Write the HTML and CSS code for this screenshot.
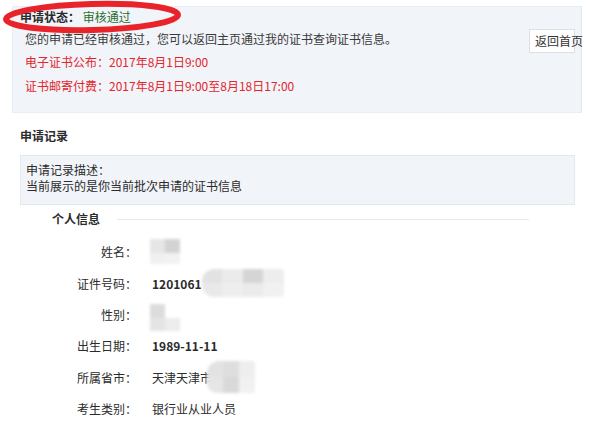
FILE: index.html
```html
<!DOCTYPE html>
<html lang="zh-CN">
<head>
<meta charset="utf-8">
<title>申请状态</title>
<link rel="stylesheet" href="styles.css">
</head>
<body>
<div class="page">
  <div class="status-panel">
    <div class="status-text">
      <div class="status-title"><b>申请状态：</b> <span class="ok">审核通过</span></div>
      <div class="msg">您的申请已经审核通过，您可以返回主页通过我的证书查询证书信息。</div>
      <div class="red r1">电子证书公布：2017年8月1日9:00</div>
      <div class="red r2">证书邮寄付费：2017年8月1日9:00至8月18日17:00</div>
    </div>
    <button class="back-btn" type="button">返回首页</button>
  </div>

  <div class="section-title">申请记录</div>
  <div class="desc-box">
    <div>申请记录描述：</div>
    <div>当前展示的是你当前批次申请的证书信息</div>
  </div>

  <div class="info-head"><span class="legend">个人信息</span><span class="rule"></span></div>

  <div class="rows">
    <div class="row"><span class="label">姓名：</span><span class="value"><span class="blob blob-name"><i class="c1"></i><i class="c2"></i><i class="c3"></i><i class="c4"></i></span></span></div>
    <div class="row"><span class="label">证件号码：</span><span class="value"><b class="num">1201061</b><span class="blob blob-id"><i class="c1"></i><i class="c2"></i><i class="c3"></i><i class="c4"></i><i class="c5"></i><i class="c6"></i><i class="c7"></i><i class="c8"></i></span></span></div>
    <div class="row"><span class="label">性别：</span><span class="value"><span class="blob blob-sex"><i class="c1"></i><i class="c2"></i><i class="c3"></i><i class="c4"></i></span></span></div>
    <div class="row"><span class="label">出生日期：</span><span class="value"><b class="num">1989-11-11</b></span></div>
    <div class="row"><span class="label">所属省市：</span><span class="value">天津天津市<span class="blob blob-city"><i class="c1"></i><i class="c2"></i><i class="c3"></i><i class="c4"></i><i class="c5"></i><i class="c6"></i></span></span></div>
    <div class="row"><span class="label">考生类别：</span><span class="value">银行业从业人员</span></div>
  </div>

  <svg class="mark" width="200" height="40" viewBox="0 0 200 40" aria-hidden="true">
    <ellipse cx="92" cy="17" rx="86" ry="13" fill="none" stroke="#e8232a" stroke-width="6" transform="rotate(-1.5 92 17)"/>
  </svg>
</div>
</body>
</html>
```

FILE: styles.css
```css
* { box-sizing: border-box; }
html, body { margin: 0; padding: 0; background: #fff; }
body {
  font-family: "Noto Sans CJK SC", "Microsoft YaHei", sans-serif;
  font-size: 12px;
  color: #2b2b2b;
}
.page {
  position: relative;
  padding-top: 6px;
  height: 428px;
  overflow: hidden;
}
.status-panel {
  margin-left: 12px;
  width: 570px;
  height: 107px;
  background: #f1f4f9;
  border: 1px solid #e8edf3;
  border-right-color: #e2e7ee;
  display: flex;
  justify-content: space-between;
  align-items: flex-start;
  padding-left: 7px;
}
.status-title { line-height: 20px; }
.status-title b { font-weight: 700; color: #2b2b2b; }
.ok { color: #2a6e2e; }
.msg { padding-left: 5px; line-height: 23px; color: #3a3a3a; }
.red { padding-left: 5px; color: #e3262c; }
.r1 { line-height: 24px; }
.r2 { line-height: 23px; }
.back-btn {
  margin-top: 22px;
  margin-right: 6px;
  width: 46px;
  height: 24px;
  padding: 0 0 0 5px;
  background: #fff;
  border: 1px solid #dcdfe3;
  border-radius: 0;
  font: inherit;
  color: #333;
  text-align: left;
  white-space: nowrap;
  overflow: visible;
  line-height: 22px;
}
.section-title {
  margin: 13px 0 0 20px;
  line-height: 20px;
  font-weight: 700;
}
.desc-box {
  margin: 9px 0 0 20px;
  width: 555px;
  height: 50px;
  background: #f1f4f9;
  border: 1px solid #e3e8ef;
  padding: 6px 5px;
  line-height: 16px;
}
.info-head {
  margin: 6px 0 0 52px;
  display: flex;
  align-items: center;
  line-height: 16px;
}
.legend { font-weight: 700; }
.rule {
  margin-left: 17px;
  width: 412px;
  height: 1px;
  background: #e6e9ee;
}
.rows { margin-top: 9px; }
.row {
  display: flex;
  align-items: center;
  height: 31.4px;
}
.label {
  width: 137px;
  text-align: right;
}
.value {
  margin-left: 15px;
  display: flex;
  align-items: center;
  white-space: nowrap;
}
.num { font-weight: 700; }
.blob {
  display: grid;
  filter: blur(1.6px);
}
.blob i { display: block; }
.blob-name {
  margin-left: -2px;
  width: 30px;
  height: 25px;
  grid-template-columns: 1fr 1fr;
  grid-template-rows: 14px 11px;
}
.blob-name .c1 { background: #e6e6e6; }
.blob-name .c2 { background: #d3d3d3; }
.blob-name .c3 { background: #f0f0f0; }
.blob-name .c4 { background: #f2f2f2; }
.blob-id {
  width: 82px;
  height: 28px;
  border-radius: 12px 4px 4px 12px;
  overflow: hidden;
  grid-template-columns: repeat(4, 1fr);
  grid-template-rows: 14px 14px;
}
.blob-id .c1 { background: #e2e2e2; }
.blob-id .c2 { background: #ebebeb; }
.blob-id .c3 { background: #d5d5d5; }
.blob-id .c4 { background: #ededed; }
.blob-id .c5 { background: #e9e9e9; }
.blob-id .c6 { background: #eeeeee; }
.blob-id .c7 { background: #ebebeb; }
.blob-id .c8 { background: #f1f1f1; }
.blob-sex {
  margin-left: -2px;
  margin-top: 7px;
  width: 30px;
  height: 27px;
  grid-template-columns: 1fr 1fr;
  grid-template-rows: 14px 13px;
}
.blob-sex .c1 { background: #dcdcdc; }
.blob-sex .c2 { background: #fff; }
.blob-sex .c3 { background: #e4e4e4; }
.blob-sex .c4 { background: #ececec; }
.blob-city {
  margin-left: -5px;
  width: 48px;
  height: 32px;
  border-radius: 12px 3px 3px 10px;
  overflow: hidden;
  grid-template-columns: repeat(3, 1fr);
  grid-template-rows: 16px 16px;
}
.blob-city .c1 { background: #e2e2e2; }
.blob-city .c2 { background: #dedede; }
.blob-city .c3 { background: #eeeeee; }
.blob-city .c4 { background: #e6e6e6; }
.blob-city .c5 { background: #d9d9d9; }
.blob-city .c6 { background: #f1f1f1; }
.mark {
  position: absolute;
  left: 0;
  top: 0;
}
```
